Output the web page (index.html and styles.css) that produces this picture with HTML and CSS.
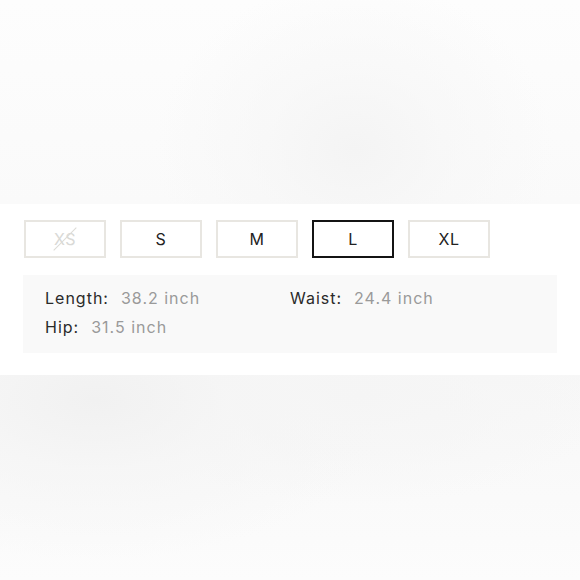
FILE: index.html
```html
<!DOCTYPE html>
<html>
<head>
<meta charset="utf-8">
<link rel="stylesheet" href="styles.css">
</head>
<body>
<div class="page">
  <div class="blur blur-top"></div>
  <section class="panel">
    <div class="sizes">
      <div class="size disabled"><span>XS</span><i class="strike"></i></div>
      <div class="size">S</div>
      <div class="size">M</div>
      <div class="size selected">L</div>
      <div class="size">XL</div>
    </div>
    <div class="measures">
      <div class="m"><span class="k">Length:</span><span class="v">38.2 inch</span></div>
      <div class="m"><span class="k">Waist:</span><span class="v">24.4 inch</span></div>
      <div class="m"><span class="k">Hip:</span><span class="v">31.5 inch</span></div>
    </div>
  </section>
  <div class="blur blur-bottom"></div>
</div>
</body>
</html>
```
FILE: styles.css
```css
html, body { margin: 0; padding: 0; }
body {
  width: 580px; height: 580px; overflow: hidden;
  font-family: "Inter", "Noto Sans", sans-serif;
  background: #fcfcfc;
}
.page { display: flex; flex-direction: column; height: 580px; }
.blur { flex: none; }
.blur-top {
  height: 204px;
  background:
    radial-gradient(ellipse 200px 170px at 355px 150px, #f4f4f4 0%, rgba(246,246,246,0.6) 45%, rgba(250,250,250,0) 100%),
    linear-gradient(180deg, #fdfdfd 0%, #fafafa 100%);
}
.panel {
  height: 171px;
  background: #fff;
  box-sizing: border-box;
  padding: 16px 23px 0 23px;
}
.sizes { display: flex; gap: 14px; padding-left: 1px; }
.size {
  position: relative;
  width: 82px; height: 38px; box-sizing: border-box;
  border: 2px solid #e8e6e1;
  display: flex; align-items: center; justify-content: center;
  font-size: 16px; letter-spacing: 0.6px; color: #222;
}
.size.selected { border-color: #141414; }
.size.disabled { color: #d9d9d6; }
.strike {
  position: absolute; left: 50%; top: 50%;
  width: 32px; height: 1px; background: #dcdbd6;
  transform: translate(-50%, -50%) rotate(-45deg);
}
.measures {
  margin-top: 17px;
  width: 534px; height: 78px; box-sizing: border-box;
  background: #f9f9f9;
  padding: 13px 22px 0 22px;
  display: grid; grid-template-columns: 245px 1fr; row-gap: 9px;
  align-content: start;
}
.m { font-size: 16px; line-height: 20px; letter-spacing: 1px; }
.k { color: #2a2a2a; margin-right: 12px; }
.v { color: #9a9a9a; }
.blur-bottom {
  height: 205px;
  background:
    radial-gradient(ellipse 300px 160px at 95px 25px, #f1f1f1 0%, rgba(245,245,245,0.7) 45%, rgba(250,250,250,0) 100%),
    radial-gradient(ellipse 260px 110px at 360px 20px, #f5f5f5 0%, rgba(248,248,248,0) 100%),
    linear-gradient(180deg, #f7f7f7 0%, #fcfcfc 100%);
}
```
